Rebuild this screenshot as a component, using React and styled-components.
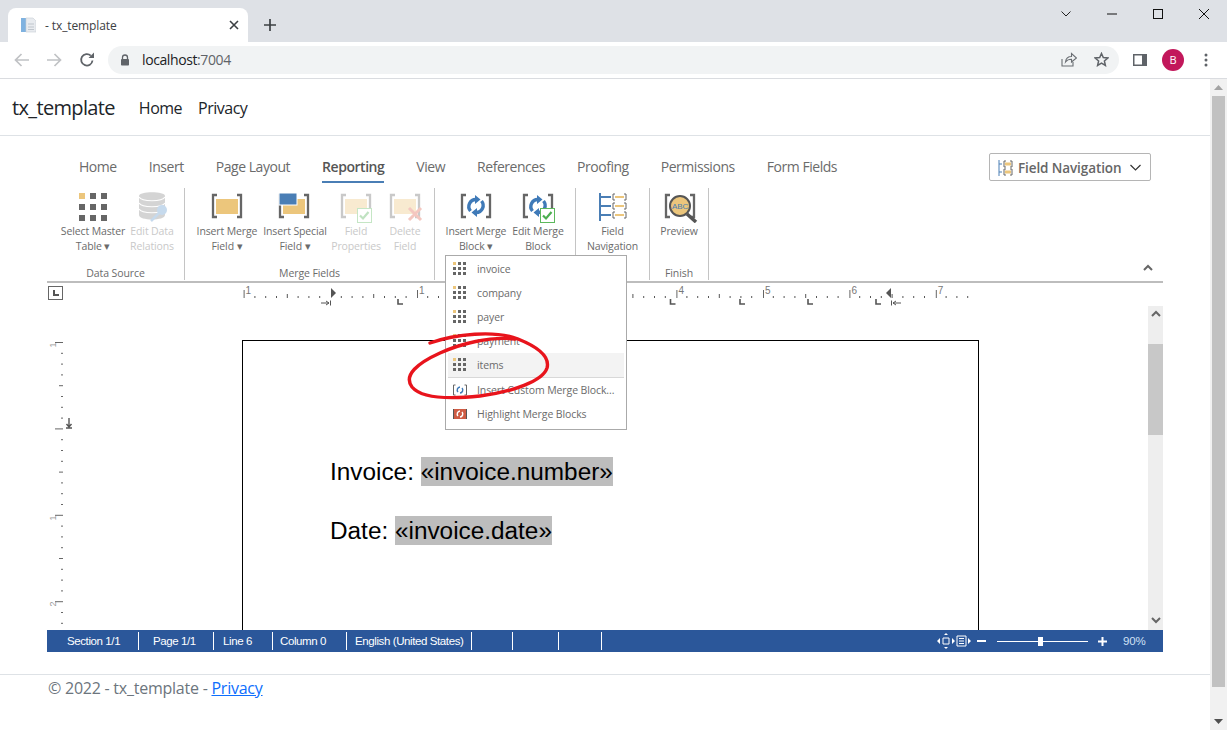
import React from 'react';
import styled, { createGlobalStyle } from 'styled-components';

const GlobalStyle = createGlobalStyle`
  html, body { margin: 0; padding: 0; height: 730px; overflow: hidden; background: #fff; }
  #root { height: 730px; }
  * { box-sizing: border-box; }
`;

const UI = `'Open Sans', 'Noto Sans', 'Liberation Sans', sans-serif`;

const Browser = styled.div`
  position: relative;
  width: 1227px;
  height: 730px;
  display: flex;
  flex-direction: column;
  font-family: ${UI};
  overflow: hidden;
`;

/* browser chrome */
const TabStrip = styled.div`
  height: 42px;
  flex: none;
  background: #dee1e6;
  display: flex;
  align-items: flex-end;
  padding-left: 8px;
`;
const BrowserTab = styled.div`
  width: 240px;
  height: 34px;
  background: #fff;
  border-radius: 8px 8px 0 0;
  display: flex;
  align-items: center;
  padding: 0 9px 0 13px;
  gap: 9px;
  font-size: 12px;
  color: #3c4043;
  letter-spacing: -0.1px;
`;
const TabTitle = styled.span`
  flex: 1;
`;
const NewTab = styled.div`
  width: 44px;
  height: 34px;
  display: flex;
  align-items: center;
  justify-content: center;
`;
const WindowButtons = styled.div`
  margin-left: auto;
  align-self: flex-start;
  display: flex;
`;
const WindowButton = styled.div`
  width: 46px;
  height: 28px;
  display: flex;
  align-items: center;
  justify-content: center;
`;
const Toolbar = styled.div`
  height: 37px;
  flex: none;
  background: #fff;
  border-bottom: 1px solid #dadce0;
  display: flex;
  align-items: center;
  padding: 0 0 1px 12px;
`;
const NavIcon = styled.div`
  width: ${(p) => p.$w || 32}px;
  height: 28px;
  flex: none;
  display: flex;
  align-items: center;
  justify-content: center;
`;
const Omnibox = styled.div`
  width: 1011px;
  height: 28px;
  margin: 0 5px 0 10px;
  border-radius: 14px;
  background: #f1f3f4;
  display: flex;
  align-items: center;
  padding: 0 2px 0 12px;
  font-size: 14px;
  color: #5f6368;
`;
const Host = styled.span`
  color: #202124;
`;
const Url = styled.div`
  margin-left: 12px;
  flex: 1;
  letter-spacing: -0.4px;
`;
const Avatar = styled.div`
  width: 22px;
  height: 22px;
  border-radius: 50%;
  background: #c2185b;
  color: #fff;
  font-size: 11px;
  display: flex;
  align-items: center;
  justify-content: center;
`;

/* page */
const Viewport = styled.div`
  flex: 1;
  display: flex;
  min-height: 0;
`;
const Page = styled.div`
  width: 1210px;
  flex: none;
`;
const Navbar = styled.nav`
  height: 57px;
  border-bottom: 1px solid #dee2e6;
  display: flex;
  align-items: center;
  padding-left: 12px;
  color: #212529;
`;
const Brand = styled.div`
  font-size: 20px;
  letter-spacing: -0.65px;
  margin-right: 24px;
`;
const NavLink = styled.div`
  font-size: 16px;
  letter-spacing: -0.5px;
  margin: 1px 16px 0 0;
`;
const PageScroll = styled.div`
  width: 17px;
  flex: none;
  background: #f1f1f1;
  display: flex;
  flex-direction: column;
  align-items: center;
`;
const PageThumb = styled.div`
  width: 13px;
  height: 591px;
  background: #c1c1c1;
`;
const ArrowCell = styled.div`
  height: ${(p) => p.$h}px;
  width: 100%;
  flex: none;
  display: flex;
  align-items: ${(p) => (p.$start ? 'flex-start' : 'center')};
  justify-content: center;
  padding-top: ${(p) => (p.$start ? '4px' : 0)};
`;
const Editor = styled.div`
  margin: 17px 47px 0;
  width: 1116px;
`;
const TabRow = styled.div`
  height: 30px;
  display: flex;
  align-items: flex-start;
  gap: 32px;
  padding-left: 32px;
`;
const RibbonTab = styled.div`
  height: 30px;
  font-size: 14px;
  line-height: 28px;
  letter-spacing: -0.46px;
  color: ${(p) => (p.$active ? '#555' : '#6b6b6b')};
  font-weight: ${(p) => (p.$active ? 600 : 400)};
  border-bottom: ${(p) => (p.$active ? '2px solid #4a7eb5' : '0')};
`;
const FieldNavButton = styled.div`
  margin-left: auto;
  margin-right: 12px;
  width: 162px;
  height: 28px;
  border: 1px solid #b5b5b5;
  border-radius: 2px;
  display: flex;
  align-items: center;
  gap: 5px;
  padding: 1px 9px 0 8px;
  font-size: 13.5px;
  font-weight: 600;
  letter-spacing: -0.1px;
  color: #666;
  white-space: nowrap;
`;
const Ribbon = styled.div`
  position: relative;
  height: 100px;
  padding-top: 5px;
  display: flex;
  border-bottom: 2px solid #bdbdbd;
`;
const Group = styled.div`
  width: ${(p) => p.$w}px;
  height: 92px;
  padding: 3px 0 0 ${(p) => p.$pad || 0}px;
  border-right: 1px solid #c4c4c4;
  display: flex;
  flex-direction: column;
`;
const GroupItems = styled.div`
  display: flex;
  height: 69px;
`;
const GroupLabel = styled.div`
  margin-left: ${(p) => (p.$pad ? -p.$pad : 0)}px;
  font-size: 10.5px;
  line-height: 14px;
  margin-top: 6px;
  letter-spacing: -0.1px;
  color: #6b6b6b;
  text-align: center;
`;
const Item = styled.div`
  position: relative;
  width: ${(p) => p.$w}px;
  flex: none;
  display: flex;
  flex-direction: column;
  align-items: center;
  font-size: 10.5px;
  line-height: 15px;
  letter-spacing: -0.12px;
  color: ${(p) => (p.$off ? '#c9c9c9' : '#6b6b6b')};
  text-align: center;
  white-space: nowrap;
`;
const IconSvg = styled.svg`
  width: 40px;
  height: 32px;
  margin-bottom: 1px;
  flex: none;
`;
const Collapse = styled.div`
  position: absolute;
  right: 10px;
  top: 81px;
  line-height: 0;
`;
const Menu = styled.div`
  position: absolute;
  z-index: 3;
  left: 0;
  top: 64px;
  width: 182px;
  height: 175px;
  background: #fff;
  border: 1px solid #aaa;
  padding: 1px 2px;
  text-align: left;
`;
const MenuItem = styled.div`
  height: ${(p) => (p.$rule ? 25 : 24)}px;
  display: flex;
  align-items: center;
  gap: 10px;
  padding-left: 5px;
  font-size: 10.5px;
  letter-spacing: -0.1px;
  color: #6b6b6b;
  background: ${(p) => (p.$hover ? '#f3f3f3' : 'transparent')};
  border-bottom: ${(p) => (p.$rule ? '1px solid #d8d8d8' : '0')};
`;
const RulerRow = styled.div`
  height: 23px;
  display: flex;
  align-items: flex-start;
`;
const RulerCorner = styled.div`
  width: 15px;
  height: 14px;
  flex: none;
  margin: 3px 0 0 1px;
  border: 1px solid #666;
  display: flex;
  align-items: center;
  justify-content: center;
  line-height: 0;
`;
const Workspace = styled.div`
  height: 324px;
  display: flex;
  overflow: hidden;
`;
const DocArea = styled.div`
  flex: 1;
  overflow: hidden;
  padding: 34px 0 0 165px;
`;
const Sheet = styled.div`
  width: 737px;
  height: 600px;
  border: 1px solid #000;
  padding: 116px 0 0 87px;
  font-family: 'Liberation Sans', Arial, sans-serif;
  font-size: 24.35px;
  color: #000;
`;
const Para = styled.div`
  height: 59px;
  line-height: 29px;
`;
const Field = styled.span`
  background: #bdbdbd;
  padding: 1px 0;
`;
const DocScroll = styled.div`
  width: 15px;
  flex: none;
  background: #eee;
  display: flex;
  flex-direction: column;
`;
const DocThumb = styled.div`
  height: 91px;
  background: #c8c8c8;
  flex: none;
`;
const ScrollSpace = styled.div`
  flex: 1;
`;
const StatusBar = styled.div`
  height: 22px;
  background: #2b579a;
  display: flex;
  align-items: center;
  color: #fff;
  font-family: 'Liberation Sans', Arial, sans-serif;
  font-size: 11.5px;
  letter-spacing: -0.4px;
`;
const StatusCell = styled.div`
  width: ${(p) => p.$w}px;
  height: 18px;
  line-height: 18px;
  padding-left: ${(p) => p.$pad}px;
  border-right: 1px solid #fff;
  white-space: nowrap;
`;
const StatusRight = styled.div`
  margin-left: auto;
  display: flex;
  align-items: center;
  padding-right: 19px;
  color: #cfe0f5;
`;
const ZoomTrack = styled.div`
  position: relative;
  width: 91px;
  height: 1px;
  background: #fff;
  margin: 0 10px;
`;
const ZoomThumb = styled.div`
  position: absolute;
  left: 41px;
  top: -4px;
  width: 5px;
  height: 9px;
  background: #fff;
`;
const ZoomValue = styled.div`
  margin-left: 16px;
  font-size: 11.5px;
  letter-spacing: -0.2px;
  width: 21px;
`;
const Footer = styled.footer`
  margin-top: 22px;
  border-top: 1px solid #dee2e6;
  padding: 1px 0 0 48px;
  font-size: 16px;
  letter-spacing: -0.24px;
  line-height: 24px;
  color: #6c757d;
`;
const FooterLink = styled.a`
  color: #0d6efd;
  text-decoration: underline;
`;
const Scribble = styled.svg`
  position: absolute;
  z-index: 5;
  left: 400px;
  top: 325px;
  width: 160px;
  height: 85px;
  pointer-events: none;
`;

const YELLOW = '#ecc67c';
const BLUE = '#4a7eb5';
const GREY = '#666';

const Brackets = ({ x1 = 5, x2 = 35, color = GREY }) => (
  <g fill="none" stroke={color} strokeWidth="2.3">
    <path d={`M${x1 + 5} 4H${x1 + 1}V26H${x1 + 5}`} />
    <path d={`M${x2 - 5} 4H${x2 - 1}V26H${x2 - 5}`} />
  </g>
);

const Cycle = ({ color = '#3f7ab8' }) => (
  <g>
    <path d="M20 8.5A7 7 0 0 0 14.5 20M20 21.5A7 7 0 0 0 25.5 10" fill="none" stroke={color} strokeWidth="3.4" />
    <path d="M19 4L24.5 8.5L19 13ZM21 17L15.5 21.5L21 26Z" fill={color} />
  </g>
);

const GridDots = () => (
  <g fill={GREY}>
    {[2, 13, 24].map((y) =>
      [6, 17, 28].map((x) => (
        <rect key={`${x}-${y}`} x={x} y={y} width="6" height="6" fill={x === 6 && y === 2 ? YELLOW : GREY} />
      ))
    )}
  </g>
);

const CheckBox = ({ x = 21, y = 17 }) => (
  <g transform={`translate(${x} ${y})`}>
    <rect x="0.5" y="0.5" width="14" height="14" fill="#fff" stroke="#5cb85c" />
    <path d="M3 7.5L6 10.5L11.5 4" fill="none" stroke="#4caf50" strokeWidth="2.2" />
  </g>
);

const Icon = ({ children }) => <IconSvg viewBox="0 0 40 32">{children}</IconSvg>;

const DbIcon = () => (
  <g opacity="0.5">
    <path d="M7 5C7 0 33 0 33 5V24C33 30 7 30 7 24Z" fill="#aaa" />
    <path d="M7 6C10 11 30 11 33 6M7 12C10 17 30 17 33 12M7 18C10 23 30 23 33 18" fill="none" stroke="#fff" strokeWidth="1.2" />
    <circle cx="30" cy="19" r="5" fill="#8fb6dc" />
    <path d="M27 22L19 30" stroke="#8fb6dc" strokeWidth="2.5" />
  </g>
);

const InsertFieldIcon = () => (
  <Icon>
    <Brackets />
    <rect x="9" y="8" width="22" height="15" fill={YELLOW} />
  </Icon>
);

const SpecialFieldIcon = () => (
  <Icon>
    <Brackets x1={4} x2={34} />
    <rect x="8" y="8" width="22" height="15" fill={YELLOW} />
    <rect x="4" y="2" width="18" height="12" fill={BLUE} stroke="#fff" />
  </Icon>
);

const FieldPropsIcon = () => (
  <Icon>
    <g opacity="0.35">
      <Brackets />
      <rect x="9" y="8" width="22" height="15" fill={YELLOW} />
      <CheckBox />
    </g>
  </Icon>
);

const DeleteFieldIcon = () => (
  <Icon>
    <g opacity="0.35">
      <Brackets />
      <rect x="9" y="8" width="22" height="15" fill={YELLOW} />
      <path d="M24 17L36 29M36 17L24 29" stroke="#e0604c" strokeWidth="3" />
    </g>
  </Icon>
);

const FieldNavIcon = () => (
  <Icon>
    <path d="M7 2V30M7 6H18M7 15H18M7 24H18" fill="none" stroke={BLUE} strokeWidth="2" />
    {[3, 12, 21].map((y) => (
      <g key={y}>
        <path d={`M22 ${y}H20V${y + 6}H22M31 ${y}H33V${y + 6}H31`} fill="none" stroke={GREY} />
        <rect x="22" y={y + 2} width="9" height="2" fill={YELLOW} />
      </g>
    ))}
  </Icon>
);

const PreviewIcon = () => (
  <Icon>
    <Brackets x1={6} x2={36} />
    <path d="M28 23L37 31" stroke="#555" strokeWidth="3.5" />
    <circle cx="21" cy="15" r="10" fill={YELLOW} stroke="#555" strokeWidth="2" />
    <text x="21" y="18" fontSize="8" textAnchor="middle" fill={BLUE} fontFamily="Liberation Sans, sans-serif">ABC</text>
  </Icon>
);

const SmallGrid = () => (
  <svg width="14" height="14" viewBox="0 0 14 14">
    {[0, 5, 10].map((y) =>
      [0, 5, 10].map((x) => (
        <rect key={`${x}-${y}`} x={x} y={y} width="3" height="3" fill={x === 0 && y === 0 ? YELLOW : GREY} />
      ))
    )}
  </svg>
);

const SmallBlock = () => (
  <svg width="14" height="14" viewBox="0 0 14 14">
    <path d="M2.5 2H0.5V12H2.5M11.5 2H13.5V12H11.5" fill="none" stroke={GREY} />
    <path d="M7 4A3 3 0 0 0 5 9M7 10A3 3 0 0 0 9 5" fill="none" stroke="#3f7ab8" strokeWidth="1.4" />
  </svg>
);

const SmallHighlight = () => (
  <svg width="14" height="14" viewBox="0 0 14 14">
    <rect x="0" y="2" width="14" height="10" fill="#cf5c44" />
    <path d="M0.5 2V12M13.5 2V12" stroke="#555" />
    <path d="M7 4A3 3 0 0 0 5 9M7 10A3 3 0 0 0 9 5" fill="none" stroke="#fff" strokeWidth="1.4" />
  </svg>
);

const tabs = ['Home', 'Insert', 'Page Layout', 'Reporting', 'View', 'References', 'Proofing', 'Permissions', 'Form Fields'];
const blocks = ['invoice', 'company', 'payer', 'payment', 'items'];
const statusCells = [
  { text: 'Section 1/1', w: 92, pad: 20 },
  { text: 'Page 1/1', w: 75, pad: 14 },
  { text: 'Line 6', w: 59, pad: 9 },
  { text: 'Column 0', w: 74, pad: 7 },
  { text: 'English (United States)', w: 125, pad: 8 },
  { text: '', w: 41, pad: 0 },
  { text: '', w: 46, pad: 0 },
  { text: '', w: 43, pad: 0 },
];

const Label = ({ lines, drop }) => (
  <>
    <div>{lines[0]}</div>
    <div>
      {lines[1]}
      {drop ? ' ▾' : ''}
    </div>
  </>
);

// the ruler svg starts at x=63 of the page; 2 and 3 sit behind the open menu
const HRuler = () => {
  const ox = 63;
  const y0 = 283;
  const ticks = [];
  for (let k = -8; k <= 59; k++) {
    if (k % 8 === 0) continue;
    const half = Math.abs(k % 8) === 4;
    ticks.push(
      <rect key={k} x={330 + k * 10.8 - ox} y={half ? 294 - y0 : 296 - y0} width="1" height={half ? 4 : 2} fill="#555" />
    );
  }
  const majors = [
    [243.6, 1], [417, 1], [676.4, 4], [763, 5], [849.4, 6], [935.8, 7],
  ];
  return (
    <svg width="1100" height="23" viewBox="0 0 1100 23">
      {ticks}
      {majors.map(([x, n]) => (
        <g key={x}>
          <rect x={x - ox} y={290 - y0} width="1" height="8" fill="#666" />
          <text x={x - ox + 2} y={11} fontSize="10" fill="#777" fontFamily="Liberation Sans, sans-serif">{n}</text>
        </g>
      ))}
      {[398, 670.5, 740, 808, 876].map((x) => (
        <path key={x} d={`M${x - ox} 16V21H${x - ox + 5}`} fill="none" stroke="#555" strokeWidth="1.6" />
      ))}
      <path d={`M${331 - ox} 5L${336 - ox} 10L${331 - ox} 15Z`} fill="#555" />
      <path d={`M${321 - ox} 20H${329 - ox}M${326 - ox} 18L${329 - ox} 20L${326 - ox} 22M${330.5 - ox} 17.5V22.5`} fill="none" stroke="#555" />
      <path d={`M${891 - ox} 5L${886 - ox} 10L${891 - ox} 15Z`} fill="#555" />
      <path d={`M${893 - ox} 20H${901 - ox}M${896 - ox} 18L${893 - ox} 20L${896 - ox} 22M${891.5 - ox} 17.5V22.5`} fill="none" stroke="#555" />
    </svg>
  );
};

const VRuler = () => {
  const marks = [];
  const top = 36;
  for (let k = 0; k < 27; k++) {
    const y = top + k * 10.8;
    const major = k % 8 === 0;
    const half = k % 8 === 4;
    marks.push(
      <rect key={k} x={major ? 8 : half ? 12 : 14} y={y} width={major ? 8 : half ? 4 : 2} height="1" fill="#666" />
    );
  }
  return (
    <svg width="30" height="324" viewBox="0 0 30 324">
      {marks}
      {[[39, 1], [212, 1], [298, 2]].map(([y, n], i) => (
        <text key={i} x="0" y="0" fontSize="9" fill="#999" fontFamily="Liberation Sans, sans-serif" transform={`translate(9 ${y}) rotate(-90)`} textAnchor="middle">{n}</text>
      ))}
      <path d="M22 112V120M19.5 118L22 121L24.5 118M19 122H25" fill="none" stroke="#555" strokeWidth="1.4" />
    </svg>
  );
};

const Chevron = ({ down }) => (
  <svg width="10" height="8" viewBox="0 0 10 8">
    <path d={down ? 'M1 2L5 6L9 2' : 'M1 6L5 2L9 6'} fill="none" stroke="#666" strokeWidth="2" />
  </svg>
);

const Tri = ({ down, fill = '#a3a3a3' }) => (
  <svg width="9" height="5" viewBox="0 0 9 5">
    <path d={down ? 'M0 0H9L4.5 5Z' : 'M0 5H9L4.5 0Z'} fill={fill} />
  </svg>
);

export default function App() {
  return (
    <Browser>
      <GlobalStyle />
      <TabStrip>
        <BrowserTab>
          <svg width="15" height="16" viewBox="0 0 15 16">
            <rect x="0" y="1" width="5" height="14" fill="#7fb2e0" />
            <path d="M5 1H12L15 4V15H5Z" fill="#e8ebef" stroke="#c7ccd3" strokeWidth="0.6" />
            <path d="M7 7H13M7 10H13M7 12.5H13" stroke="#bfc5cc" />
          </svg>
          <TabTitle>- tx_template</TabTitle>
          <svg width="10" height="10" viewBox="0 0 10 10">
            <path d="M1 1L9 9M9 1L1 9" stroke="#3c4043" strokeWidth="1.6" />
          </svg>
        </BrowserTab>
        <NewTab>
          <svg width="12" height="12" viewBox="0 0 12 12">
            <path d="M6 0V12M0 6H12" stroke="#3c4043" strokeWidth="1.7" />
          </svg>
        </NewTab>
        <WindowButtons>
          <WindowButton>
            <svg width="10" height="6" viewBox="0 0 10 6">
              <path d="M0.5 0.5L5 5L9.5 0.5" fill="none" stroke="#222" />
            </svg>
          </WindowButton>
          <WindowButton>
            <svg width="10" height="2" viewBox="0 0 10 2">
              <path d="M0 1H10" stroke="#111" />
            </svg>
          </WindowButton>
          <WindowButton>
            <svg width="10" height="10" viewBox="0 0 10 10">
              <rect x="0.5" y="0.5" width="9" height="9" fill="none" stroke="#111" />
            </svg>
          </WindowButton>
          <WindowButton>
            <svg width="10" height="10" viewBox="0 0 10 10">
              <path d="M0 0L10 10M10 0L0 10" stroke="#111" />
            </svg>
          </WindowButton>
        </WindowButtons>
      </TabStrip>
      <Toolbar>
        <NavIcon $w={20}>
          <svg width="16" height="14" viewBox="0 0 16 14">
            <path d="M15 7H2M7.5 1L1.5 7L7.5 13" fill="none" stroke="#c0c2c5" strokeWidth="1.7" />
          </svg>
        </NavIcon>
        <NavIcon $w={44}>
          <svg width="16" height="14" viewBox="0 0 16 14">
            <path d="M1 7H14M8.5 1L14.5 7L8.5 13" fill="none" stroke="#c0c2c5" strokeWidth="1.7" />
          </svg>
        </NavIcon>
        <NavIcon $w={22}>
          <svg width="16" height="16" viewBox="0 0 16 16">
            <path d="M13.5 8.5A5.7 5.7 0 1 1 11.8 3.7" fill="none" stroke="#5f6368" strokeWidth="1.8" />
            <path d="M9.5 6H15V0.5Z" fill="#5f6368" />
          </svg>
        </NavIcon>
        <Omnibox>
          <svg width="10" height="12" viewBox="0 0 10 12">
            <path d="M2.5 5V3.5A2.5 2.5 0 0 1 7.5 3.5V5" fill="none" stroke="#5f6368" strokeWidth="1.3" />
            <rect x="1" y="5" width="8" height="6.5" rx="0.8" fill="#5f6368" />
          </svg>
          <Url>
            <Host>localhost</Host>:7004
          </Url>
          <NavIcon>
            <svg width="16" height="15" viewBox="0 0 16 15">
              <path d="M1 7V14H12V10" fill="none" stroke="#6a6e73" strokeWidth="1.1" />
              <path d="M4.5 10C5 6 8 4.5 10.5 4.5V1.5L15.5 6L10.5 10V7.3C8 7.3 6 8 4.5 10Z" fill="none" stroke="#6a6e73" strokeWidth="1.1" />
            </svg>
          </NavIcon>
          <NavIcon>
            <svg width="15" height="15" viewBox="0 0 15 15">
              <path d="M7.5 1.5L9.3 5.6L13.8 6L10.4 9L11.4 13.4L7.5 11.1L3.6 13.4L4.6 9L1.2 6L5.7 5.6Z" fill="none" stroke="#5f6368" strokeWidth="1.5" />
            </svg>
          </NavIcon>
        </Omnibox>
        <NavIcon>
          <svg width="14" height="12" viewBox="0 0 14 12">
            <rect width="14" height="12" fill="#5f6368" />
            <rect x="1.5" y="1.5" width="7.5" height="9" fill="#fff" />
          </svg>
        </NavIcon>
        <NavIcon $w={34}>
          <Avatar>B</Avatar>
        </NavIcon>
        <NavIcon>
          <svg width="4" height="14" viewBox="0 0 4 14">
            <circle cx="2" cy="2" r="1.5" fill="#5f6368" />
            <circle cx="2" cy="7" r="1.5" fill="#5f6368" />
            <circle cx="2" cy="12" r="1.5" fill="#5f6368" />
          </svg>
        </NavIcon>
      </Toolbar>
      <Viewport>
        <Page>
          <Navbar>
            <Brand>tx_template</Brand>
            <NavLink>Home</NavLink>
            <NavLink>Privacy</NavLink>
          </Navbar>
          <Editor>
            <TabRow>
              {tabs.map((t) => (
                <RibbonTab key={t} $active={t === 'Reporting'}>{t}</RibbonTab>
              ))}
              <FieldNavButton>
                <svg width="15" height="16" viewBox="0 0 15 16">
                  <path d="M1 0V16M1 4H4M1 12H4" fill="none" stroke={BLUE} />
                  <path d="M8 1H6V7H8M12 1H14V7H12M8 9H6V15H8M12 9H14V15H12" fill="none" stroke={GREY} />
                  <rect x="7" y="2.5" width="6" height="3" fill={YELLOW} />
                  <rect x="7" y="10.5" width="6" height="3" fill={YELLOW} />
                </svg>
                <span>Field Navigation</span>
                <svg width="11" height="7" viewBox="0 0 11 7" style={{ marginLeft: 'auto' }}>
                  <path d="M0.5 1L5.5 6L10.5 1" fill="none" stroke="#333" strokeWidth="1.2" />
                </svg>
              </FieldNavButton>
            </TabRow>
            <Ribbon>
              <Group $w={138} $pad={13}>
                <GroupItems>
                  <Item $w={66}>
                    <Icon><GridDots /></Icon>
                    <Label lines={['Select Master', 'Table']} drop />
                  </Item>
                  <Item $w={52} $off>
                    <Icon><DbIcon /></Icon>
                    <Label lines={['Edit Data', 'Relations']} />
                  </Item>
                </GroupItems>
                <GroupLabel $pad={13}>Data Source</GroupLabel>
              </Group>
              <Group $w={250} $pad={11}>
                <GroupItems>
                  <Item $w={62}>
                    <InsertFieldIcon />
                    <Label lines={['Insert Merge', 'Field']} drop />
                  </Item>
                  <Item $w={74}>
                    <SpecialFieldIcon />
                    <Label lines={['Insert Special', 'Field']} drop />
                  </Item>
                  <Item $w={48} $off>
                    <FieldPropsIcon />
                    <Label lines={['Field', 'Properties']} />
                  </Item>
                  <Item $w={50} $off>
                    <DeleteFieldIcon />
                    <Label lines={['Delete', 'Field']} />
                  </Item>
                </GroupItems>
                <GroupLabel $pad={11}>Merge Fields</GroupLabel>
              </Group>
              <Group $w={141} $pad={10}>
                <GroupItems>
                  <Item $w={62}>
                    <Icon>
                      <Brackets />
                      <Cycle />
                    </Icon>
                    <Label lines={['Insert Merge', 'Block']} drop />
                    <Menu>
                      {blocks.map((b) => (
                        <MenuItem key={b} $hover={b === 'items'} $rule={b === 'items'}>
                          <SmallGrid />
                          <span>{b}</span>
                        </MenuItem>
                      ))}
                      <MenuItem>
                        <SmallBlock />
                        <span>Insert Custom Merge Block...</span>
                      </MenuItem>
                      <MenuItem>
                        <SmallHighlight />
                        <span>Highlight Merge Blocks</span>
                      </MenuItem>
                    </Menu>
                  </Item>
                  <Item $w={62}>
                    <Icon>
                      <Brackets />
                      <Cycle />
                      <CheckBox x={22} y={17} />
                    </Icon>
                    <Label lines={['Edit Merge', 'Block']} />
                  </Item>
                </GroupItems>
              </Group>
              <Group $w={74}>
                <GroupItems>
                  <Item $w={73}>
                    <FieldNavIcon />
                    <Label lines={['Field', 'Navigation']} />
                  </Item>
                </GroupItems>
              </Group>
              <Group $w={59}>
                <GroupItems>
                  <Item $w={58}>
                    <PreviewIcon />
                    <Label lines={['Preview', '']} />
                  </Item>
                </GroupItems>
                <GroupLabel>Finish</GroupLabel>
              </Group>
              <Collapse><Chevron /></Collapse>
            </Ribbon>
            <RulerRow>
              <RulerCorner>
                <svg width="6" height="6" viewBox="0 0 6 6">
                  <path d="M1 0V5H6" fill="none" stroke="#555" strokeWidth="2" />
                </svg>
              </RulerCorner>
              <HRuler />
            </RulerRow>
            <Workspace>
              <VRuler />
              <DocArea>
                <Sheet>
                  <Para>Invoice: <Field>«invoice.number»</Field></Para>
                  <Para>Date: <Field>«invoice.date»</Field></Para>
                </Sheet>
              </DocArea>
              <DocScroll>
                <ArrowCell $h={38} $start><Chevron /></ArrowCell>
                <DocThumb />
                <ScrollSpace />
                <ArrowCell $h={20}><Chevron down /></ArrowCell>
              </DocScroll>
            </Workspace>
            <StatusBar>
              {statusCells.map((c, i) => (
                <StatusCell key={i} $w={c.w} $pad={c.pad}>{c.text}</StatusCell>
              ))}
              <StatusRight>
                <svg width="34" height="16" viewBox="0 0 34 16">
                  <path d="M6 5V11H12V5ZM20 3V13H29V3Z" fill="none" stroke="#fff" />
                  <path d="M9 0L11 2H7ZM9 16L11 14H7ZM0 8L3 5V11ZM18 8L15 5V11ZM34 8L31 5V11Z" fill="#fff" />
                  <path d="M22 5.5H27M22 8H27M22 10.5H27" stroke="#fff" />
                </svg>
                <svg width="10" height="2" viewBox="0 0 10 2" style={{ marginLeft: 6 }}>
                  <rect width="9" height="2" fill="#fff" />
                </svg>
                <ZoomTrack><ZoomThumb /></ZoomTrack>
                <svg width="9" height="9" viewBox="0 0 9 9">
                  <path d="M4.5 0V9M0 4.5H9" stroke="#fff" strokeWidth="2" />
                </svg>
                <ZoomValue>90%</ZoomValue>
              </StatusRight>
            </StatusBar>
          </Editor>
          <Footer>
            © 2022 - tx_template - <FooterLink>Privacy</FooterLink>
          </Footer>
        </Page>
        <PageScroll>
          <ArrowCell $h={17}><Tri /></ArrowCell>
          <PageThumb />
          <ScrollSpace />
          <ArrowCell $h={17}><Tri down fill="#505050" /></ArrowCell>
        </PageScroll>
      </Viewport>
      <Scribble viewBox="0 0 160 85">
        <path
          d="M30 18C55 9 95 5 118 14C138 22 150 32 147 43C143 56 112 67 80 71C52 74 22 74 12 62C3 50 18 38 40 28C60 19 90 11 115 14"
          fill="none"
          stroke="#e8141c"
          strokeWidth="3.4"
          strokeLinecap="round"
        />
      </Scribble>
    </Browser>
  );
}
